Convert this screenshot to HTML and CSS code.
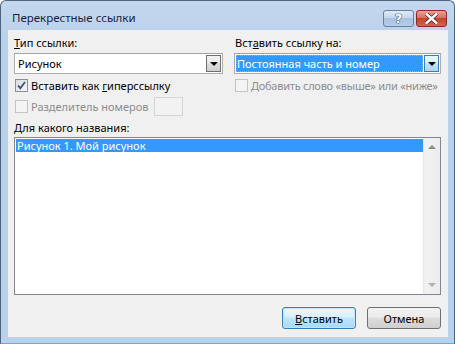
FILE: index.html
```html
<!DOCTYPE html>
<html lang="ru">
<head>
    <meta charset="UTF-8">
    <title>Перекрестные ссылки</title>
    <link rel="stylesheet" href="styles.css">
</head>
<body>

<div class="window">
    <div class="titlebar">
        <span class="title">Перекрестные ссылки</span>
        <div class="caption-buttons">
            <div class="cap-btn help">
                <span>?</span>
            </div>
            <div class="cap-btn close">
                <svg width="13" height="11" viewBox="0 0 13 11">
                    <path d="M1.5 1 L11.5 10 M11.5 1 L1.5 10" stroke="#5a2020" stroke-width="4" stroke-linecap="round"/>
                    <path d="M1.5 1 L11.5 10 M11.5 1 L1.5 10" stroke="#fff" stroke-width="2.4" stroke-linecap="round"/>
                </svg>
            </div>
        </div>
    </div>

    <div class="client">
        <div class="columns">
            <div class="col">
                <div class="label"><u>Т</u>ип ссылки:</div>
                <div class="combo">
                    <div class="combo-text">Рисунок</div>
                    <div class="combo-btn"><span class="arrow"></span></div>
                </div>
                <div class="check-row">
                    <span class="checkbox checked">
                        <svg width="11" height="11" viewBox="0 0 11 11">
                            <path d="M2 5.5 L4.3 8.2 L9 2" fill="none" stroke="#3b4f8c" stroke-width="1.8"/>
                        </svg>
                    </span>
                    <span>Вставить как <u>г</u>иперссылку</span>
                </div>
                <div class="check-row sep-row disabled">
                    <span class="checkbox"></span>
                    <span>Разделитель номеров</span>
                    <span class="small-input"></span>
                </div>
            </div>
            <div class="col">
                <div class="label right-label">Вст<u>а</u>вить ссылку на:</div>
                <div class="combo focused">
                    <div class="combo-text"><span class="selected">Постоянная часть и номер</span></div>
                    <div class="combo-btn"><span class="arrow"></span></div>
                </div>
                <div class="check-row disabled">
                    <span class="checkbox"></span>
                    <span class="nowrap">Добавить слово «выше» или «ниже»</span>
                </div>
            </div>
        </div>

        <div class="label list-label"><u>Д</u>ля какого названия:</div>
        <div class="listbox">
            <div class="items">
                <div class="item active">Рисунок 1. Мой рисунок</div>
            </div>
            <div class="scrollbar">
                <span class="sb-arrow up"></span>
                <span class="sb-arrow down"></span>
            </div>
        </div>

        <div class="footer">
            <button class="btn default"><u>В</u>ставить</button>
            <button class="btn">Отмена</button>
        </div>
    </div>
</div>

</body>
</html>
```

FILE: styles.css
```css
body {
    margin: 0;
    background-color: #ffffff;
    font-family: "Noto Sans", "Liberation Sans", sans-serif;
    font-size: 11px;
    color: #000;
}

u {
    text-decoration: underline;
    text-underline-offset: 1px;
}

.window {
    width: 455px;
    height: 344px;
    box-sizing: border-box;
    border: 1px solid #4e6580;
    border-bottom-color: #3fbfe0;
    border-radius: 6px 6px 0 0;
    background: linear-gradient(#c3d8ee, #b9d1ea 40px);
    padding: 0 6px 6px 7px;
    display: flex;
    flex-direction: column;
}

.titlebar {
    height: 29px;
    display: flex;
    align-items: flex-start;
}

.title {
    margin: 9px 0 0 4px;
    color: #1b1b3c;
    font-size: 11.5px;
}

.caption-buttons {
    margin-left: auto;
    margin-top: 9px;
    margin-right: 1px;
    display: flex;
    gap: 2px;
}

.cap-btn {
    width: 31px;
    height: 17px;
    box-sizing: border-box;
    border-radius: 3px;
    display: flex;
    align-items: center;
    justify-content: center;
}

.help {
    border: 1px solid #6a7f99;
    background: linear-gradient(#dfeaf6 0%, #c5d7ec 45%, #a9c2e0 50%, #b5cde8 100%);
}

.help span {
    font-family: "DejaVu Sans", sans-serif;
    font-weight: bold;
    font-size: 13px;
    color: #fff;
    text-shadow: 0 0 1px #34486a, 0 0 1px #34486a, 0 0 1px #34486a;
    line-height: 1;
}

.close {
    border: 1px solid #8a2b25;
    background: linear-gradient(#e6a393 0%, #d6735f 45%, #c4442c 50%, #d2654c 100%);
}

.client {
    flex: 1;
    background-color: #f0f0f0;
    padding: 5px 7px 8px 6px;
    display: flex;
    flex-direction: column;
}

.columns {
    display: grid;
    grid-template-columns: 209px 207px;
    column-gap: 11px;
}

.label {
    line-height: 15px;
    height: 15px;
}

.right-label {
    padding-left: 1px;
}

.combo {
    margin-top: 3px;
    height: 21px;
    box-sizing: border-box;
    border: 1px solid #abadb3;
    border-top-color: #a0a2a8;
    background-color: #fff;
    display: flex;
    padding: 1px;
}

.combo-text {
    flex: 1;
    line-height: 17px;
    padding-left: 2px;
}

.combo-btn {
    width: 15px;
    box-sizing: border-box;
    border: 1px solid #707070;
    background: linear-gradient(#f2f2f2 0%, #ebebeb 45%, #dddddd 50%, #cfcfcf 100%);
    display: flex;
    align-items: center;
    justify-content: center;
}

.arrow {
    width: 0;
    height: 0;
    border-left: 4px solid transparent;
    border-right: 4px solid transparent;
    border-top: 4px solid #000;
}

.focused .combo-text {
    padding-left: 0;
    padding-right: 1px;
}

.selected {
    display: block;
    height: 17px;
    box-sizing: border-box;
    background-color: #3399ff;
    color: #fff;
    padding-left: 1px;
    outline: 1px dotted #ff9a2e;
    outline-offset: -1px;
}

.focused .combo-btn {
    border-color: #3c7fb1;
    background: linear-gradient(#eaf6fd 0%, #d9f0fc 45%, #bee6fd 50%, #a7d9f5 100%);
}

.check-row {
    margin-top: 5px;
    display: flex;
    align-items: center;
    gap: 3px;
    line-height: 13px;
    padding-left: 1px;
}

.nowrap {
    white-space: nowrap;
    letter-spacing: -0.25px;
}

.checkbox {
    flex: none;
    width: 13px;
    height: 13px;
    box-sizing: border-box;
    border: 1px solid #8e8f8f;
    background: linear-gradient(135deg, #dcdcdc, #f6f6f6);
    display: flex;
    align-items: center;
    justify-content: center;
}

.disabled {
    color: #8d8d8d;
}

.disabled .checkbox {
    border-color: #c4c4c4;
    background: #f4f4f4;
}

.sep-row {
    height: 19px;
}

.small-input {
    width: 29px;
    height: 19px;
    box-sizing: border-box;
    border: 1px solid #d5d5d5;
    background-color: #f2f2f2;
    margin-left: auto;
    margin-right: 40px;
}

.list-label {
    margin-top: 4px;
}

.listbox {
    margin-top: 2px;
    height: 158px;
    box-sizing: border-box;
    border: 1px solid #828790;
    background-color: #fff;
    display: flex;
}

.items {
    flex: 1;
    padding: 1px 0 0 1px;
}

.item {
    height: 13px;
    line-height: 13px;
    padding-left: 1px;
}

.item.active {
    background-color: #3399ff;
    color: #fff;
}

.scrollbar {
    width: 17px;
    background: linear-gradient(90deg, #e3e3e3, #f2f2f2 2px, #ececec);
    display: flex;
    flex-direction: column;
    justify-content: space-between;
    align-items: center;
    padding: 7px 0;
}

.sb-arrow {
    width: 0;
    height: 0;
    border-left: 4px solid transparent;
    border-right: 4px solid transparent;
}

.sb-arrow.up {
    border-bottom: 4px solid #8a8a8a;
}

.sb-arrow.down {
    border-top: 4px solid #b0b0b0;
}

.footer {
    margin-top: 12px;
    display: flex;
    justify-content: flex-end;
    gap: 11px;
}

.btn {
    width: 74px;
    height: 22px;
    font-family: inherit;
    font-size: 11px;
    color: #000;
    border: 1px solid #707070;
    border-radius: 3px;
    background: linear-gradient(#f2f2f2 0%, #ebebeb 45%, #dddddd 50%, #cfcfcf 100%);
    padding: 0;
}

.btn.default {
    border-color: #3c7fb1;
    box-shadow: inset 0 0 0 1px #bfe6fc;
    background: linear-gradient(#eaf6fd 0%, #d9f0fc 45%, #bee6fd 50%, #a7d9f5 100%);
}
```
